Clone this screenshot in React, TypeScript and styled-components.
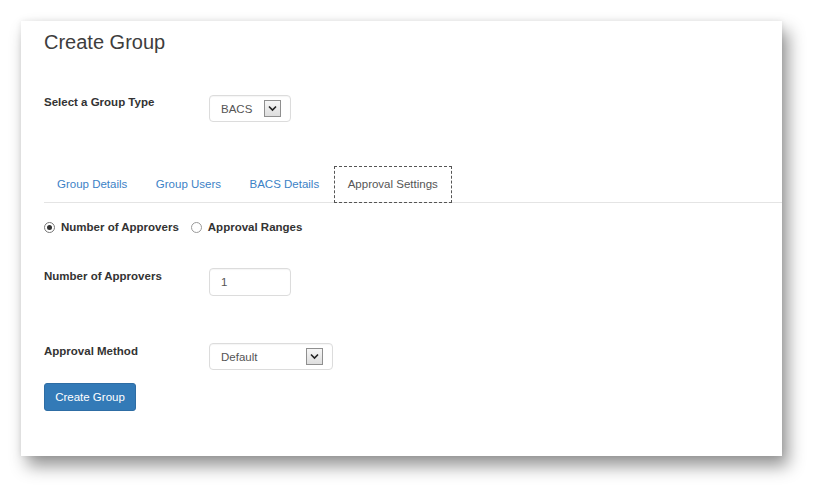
import React from "react";
import styled, { createGlobalStyle } from "styled-components";

const GlobalStyle = createGlobalStyle`
  html, body {
    margin: 0;
    padding: 0;
    background: #ffffff;
  }
  body {
    font-family: "Liberation Sans", Arial, sans-serif;
    color: #333333;
  }
`;

const Page = styled.div`
  width: 824px;
  height: 498px;
  padding: 21px 0 0 21px;
  box-sizing: border-box;
`;

const Card = styled.div`
  width: 761px;
  height: 435px;
  background: #ffffff;
  box-sizing: border-box;
  padding: 9px 0 0 23px;
  box-shadow: 6px 10px 16px rgba(0, 0, 0, 0.42), 0 0 6px rgba(0, 0, 0, 0.08);
`;

const Title = styled.h2`
  margin: 0;
  font-size: 20px;
  line-height: 24px;
  font-weight: normal;
  color: #3d3d3d;
`;

const FormRow = styled.div<{ $top: number }>`
  display: flex;
  align-items: flex-start;
  margin-top: ${(p) => p.$top}px;
`;

const Label = styled.div<{ $pad?: number }>`
  width: 165px;
  flex: none;
  font-size: 11.5px;
  line-height: 14px;
  font-weight: bold;
  color: #333333;
  padding-top: ${(p) => p.$pad ?? 0}px;
`;

const Control = styled.div<{ $w: number; $h: number }>`
  width: ${(p) => p.$w}px;
  height: ${(p) => p.$h}px;
  box-sizing: border-box;
  border: 1px solid #dcdcdc;
  border-radius: 4px;
  background: #ffffff;
  display: flex;
  align-items: center;
  justify-content: space-between;
  padding: 0 9px 0 11px;
  font-size: 11.5px;
  color: #555555;
  box-shadow: inset 0 1px 1px rgba(0, 0, 0, 0.04);
`;

const ArrowBox = styled.span`
  width: 17px;
  height: 17px;
  box-sizing: border-box;
  border: 1px solid #8f8f8f;
  background: linear-gradient(#f6f6f6, #dedede);
  display: flex;
  align-items: center;
  justify-content: center;
`;

const TabList = styled.div`
  display: flex;
  margin-top: 45px;
  border-bottom: 1px solid #e4e4e4;
`;

const Tab = styled.div<{ $active?: boolean }>`
  height: 35px;
  line-height: 35px;
  padding: 0 13.5px 0 13px;
  margin-right: 2px;
  font-size: 11.5px;
  color: ${(p) => (p.$active ? "#555555" : "#3c82c6")};
  outline: ${(p) => (p.$active ? "1px dashed #555555" : "none")};
  outline-offset: 0;
`;

const RadioRow = styled.div`
  display: flex;
  align-items: center;
  margin-top: 17px;
  height: 14px;
  font-size: 11.5px;
  font-weight: bold;
  color: #333333;
`;

const RadioOption = styled.label`
  display: flex;
  align-items: center;
  margin-right: 12px;
`;

const RadioCircle = styled.span<{ $checked?: boolean }>`
  width: 11px;
  height: 11px;
  box-sizing: border-box;
  border-radius: 50%;
  border: 1px solid ${(p) => (p.$checked ? "#777777" : "#9a9a9a")};
  background: #ffffff;
  margin-right: 6px;
  display: flex;
  align-items: center;
  justify-content: center;
  &::after {
    content: "";
    width: 5px;
    height: 5px;
    border-radius: 50%;
    background: ${(p) => (p.$checked ? "#333333" : "transparent")};
  }
`;

const Button = styled.button`
  margin-top: 13px;
  width: 92px;
  height: 28px;
  border: 1px solid #2e6da4;
  border-radius: 3px;
  background: #337ab7;
  color: #ffffff;
  font-family: "Liberation Sans", Arial, sans-serif;
  font-size: 11.5px;
  padding: 0;
  display: block;
`;

const Chevron = () => (
  <svg width="9" height="7" viewBox="0 0 9 7">
    <path d="M1 1.5 L4.5 5 L8 1.5" fill="none" stroke="#222" strokeWidth="1.6" />
  </svg>
);

const Select = ({ value, w }: { value: string; w: number }) => (
  <Control $w={w} $h={27}>
    <span>{value}</span>
    <ArrowBox>
      <Chevron />
    </ArrowBox>
  </Control>
);

export default function App() {
  return (
    <>
      <GlobalStyle />
      <Page>
        <Card>
          <Title>Create Group</Title>
          <FormRow $top={41}>
            <Label>Select a Group Type</Label>
            <Select value="BACS" w={82} />
          </FormRow>
          <TabList>
            <Tab>Group Details</Tab>
            <Tab>Group Users</Tab>
            <Tab>BACS Details</Tab>
            <Tab $active>Approval Settings</Tab>
          </TabList>
          <RadioRow>
            <RadioOption>
              <RadioCircle $checked />
              Number of Approvers
            </RadioOption>
            <RadioOption>
              <RadioCircle />
              Approval Ranges
            </RadioOption>
          </RadioRow>
          <FormRow $top={34}>
            <Label $pad={1}>Number of Approvers</Label>
            <Control $w={82} $h={28}>1</Control>
          </FormRow>
          <FormRow $top={47}>
            <Label $pad={1}>Approval Method</Label>
            <Select value="Default" w={124} />
          </FormRow>
          <Button>Create Group</Button>
        </Card>
      </Page>
    </>
  );
}
